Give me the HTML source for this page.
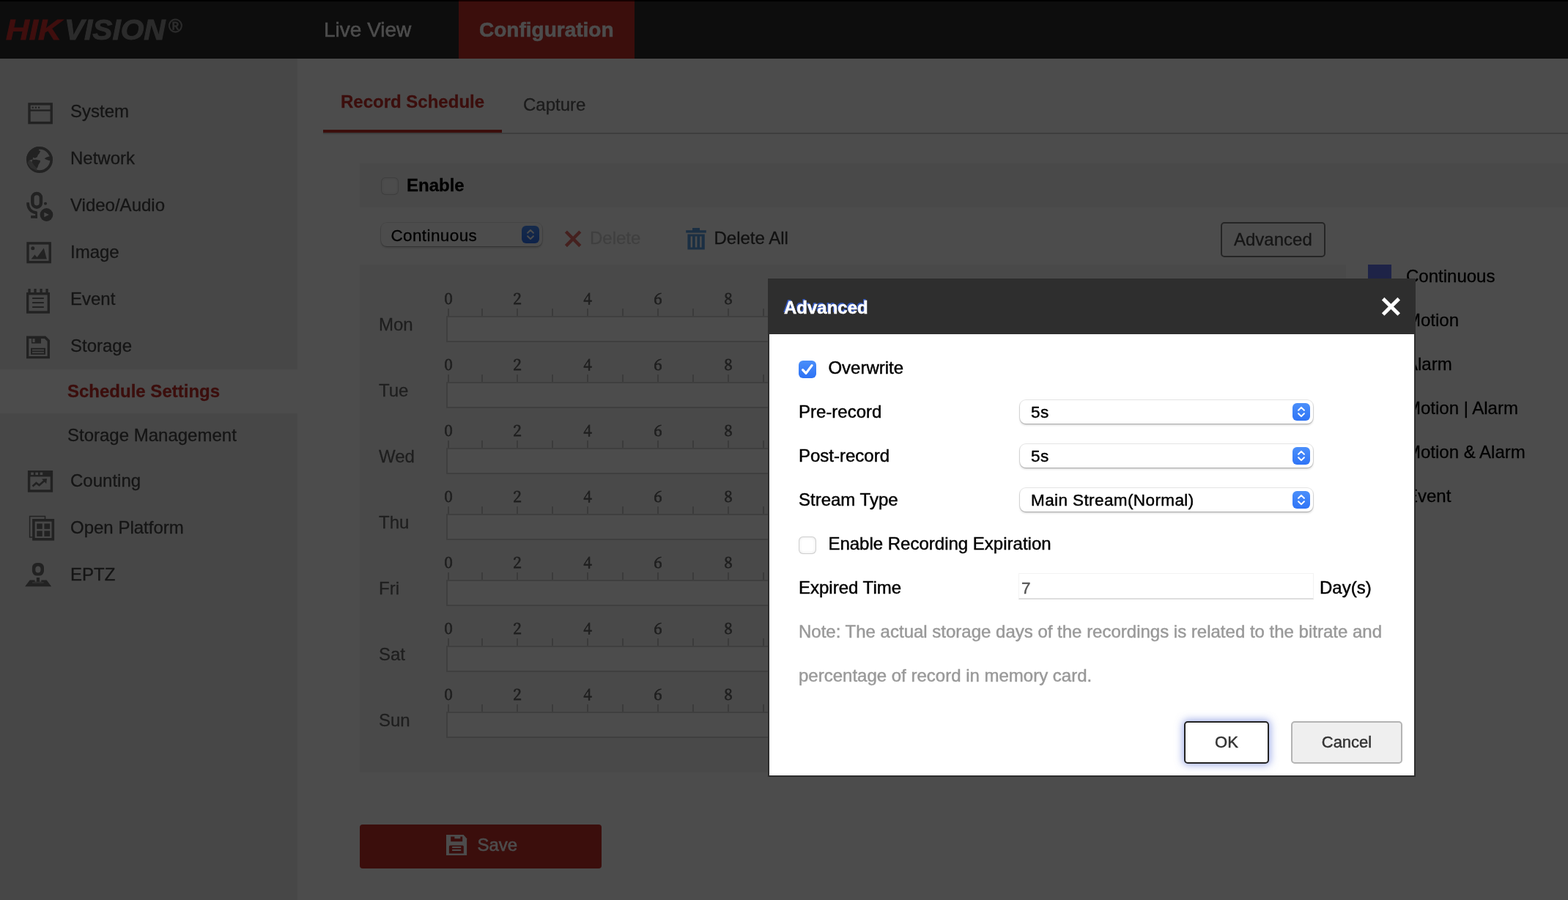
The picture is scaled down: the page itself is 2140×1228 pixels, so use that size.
<!DOCTYPE html>
<html lang="en"><head><meta charset="utf-8"><title>Configuration</title>
<style>
html,body{margin:0;padding:0}
#wrap{position:absolute;left:0;top:0;width:2140px;height:1228px;will-change:transform}
body{width:2140px;height:1228px;overflow:hidden;position:relative;background:#fff;font-family:"Liberation Sans",sans-serif;color:#464646;-webkit-text-stroke:.3px}
div,span{box-sizing:border-box}
.abs{position:absolute}
#header{position:absolute;left:0;top:0;width:2140px;height:80px;background:#2d2d2d}
#side{position:absolute;left:0;top:80px;width:406px;height:1148px;background:#eeeeee}
#mask{position:absolute;left:0;top:0;width:2140px;height:1228px;background:rgba(0,0,0,.7)}
#topline{position:absolute;left:0;top:0;width:626px;height:2px;background:#000}
#topline2{position:absolute;left:866px;top:0;width:1274px;height:2px;background:#000}
.sel{position:absolute;background:#fff;border-radius:8px;box-shadow:0 0 0 1px rgba(0,0,0,.10),0 1px 1px rgba(0,0,0,.12),0 2px 3px rgba(0,0,0,.18)}
.sel .btn{position:absolute;right:4px;top:4px;width:24px;height:24px;border-radius:6px;background:linear-gradient(#4b8ffa,#2f74f6)}
.sel .btn svg{position:absolute;left:0;top:0}
.mactext{font-size:22.5px !important;letter-spacing:.4px;color:#000}
.cb{position:absolute;width:24px;height:24px;border-radius:6px;background:#fff;box-shadow:inset 0 0 0 1px #cfcfcf,inset 0 0 4px 1px rgba(0,0,0,.10)}
.cb.on{background:linear-gradient(#4a8ef9,#2d72f5);box-shadow:none}
svg{display:block}
.num{position:absolute;left:0;top:0;font-family:"Noto Serif CJK SC","Liberation Serif",serif;font-size:21px;line-height:28px;color:#6a6a6a;-webkit-text-stroke:.8px}
</style></head><body><div id="wrap">

<div id="header">
<div class="abs" style="left:626px;top:0;width:240px;height:80px;background:#c62f2b;border-top:2px solid #4a0000"></div>
<div class="abs" style="left:8px;top:18.5px;height:44px;white-space:nowrap;font-weight:bold;font-style:italic;font-size:38px;line-height:44px;-webkit-text-stroke:.9px"><span id="hik" style="display:inline-block;color:#d2302e;transform-origin:0 50%;transform:scaleX(1.16)">HIK</span><span id="vis" style="display:inline-block;color:#929292;margin-left:14.5px;transform-origin:0 50%;transform:scaleX(1.068)">VISION</span></div>
<div class="abs" style="left:230px;top:20px;font-size:25.5px;line-height:30px;color:#929292;-webkit-text-stroke:.8px">&reg;</div>
<div style="position:absolute;left:442px;top:25px;font-size:28px;line-height:31px;white-space:nowrap;color:#fff;-webkit-text-stroke:.5px">Live View</div>
<div style="position:absolute;left:654px;top:25px;font-size:28px;line-height:31px;white-space:nowrap;font-weight:bold;color:#fff;-webkit-text-stroke:.5px">Configuration</div>
</div>
<div id="side">
<div class="abs" style="left:0;top:424px;width:406px;height:60px;background:#fff"></div>
<div style="position:absolute;left:96px;top:58px;font-size:24px;line-height:27px;white-space:nowrap;">System</div>
<div style="position:absolute;left:96px;top:122px;font-size:24px;line-height:27px;white-space:nowrap;">Network</div>
<div style="position:absolute;left:96px;top:186px;font-size:24px;line-height:27px;white-space:nowrap;">Video/Audio</div>
<div style="position:absolute;left:96px;top:250px;font-size:24px;line-height:27px;white-space:nowrap;">Image</div>
<div style="position:absolute;left:96px;top:314px;font-size:24px;line-height:27px;white-space:nowrap;">Event</div>
<div style="position:absolute;left:96px;top:378px;font-size:24px;line-height:27px;white-space:nowrap;">Storage</div>
<div style="position:absolute;left:96px;top:562px;font-size:24px;line-height:27px;white-space:nowrap;">Counting</div>
<div style="position:absolute;left:96px;top:626px;font-size:24px;line-height:27px;white-space:nowrap;">Open Platform</div>
<div style="position:absolute;left:96px;top:690px;font-size:24px;line-height:27px;white-space:nowrap;">EPTZ</div>
<div style="position:absolute;left:92px;top:440px;font-size:24px;line-height:27px;white-space:nowrap;font-weight:bold;color:#c62f2b">Schedule Settings</div>
<div style="position:absolute;left:92px;top:500px;font-size:24px;line-height:27px;white-space:nowrap;">Storage Management</div>
<svg class="abs" style="left:0;top:0" width="406" height="1148" viewBox="0 80 406 1148" fill="none" stroke="#727272">
<rect x="40" y="141.9" width="30.2" height="25.7" stroke-width="3.4"/>
<line x1="40" y1="150.6" x2="70" y2="150.6" stroke-width="2.4"/>
<g fill="#727272" stroke="none"><rect x="43.6" y="145.6" width="2.2" height="2.2"/><rect x="47.8" y="145.6" width="2.2" height="2.2"/><rect x="52" y="145.6" width="2.2" height="2.2"/></g>
<clipPath id="gc"><circle cx="54" cy="218" r="18"/></clipPath>
<circle cx="54" cy="218" r="16.15" stroke-width="3.7"/>
<g clip-path="url(#gc)" stroke="none"><path fill="#9c9c9c" d="M39.8 218.5 L43.9 221.3 L46.4 224.6 L48.8 227.8 L50.4 228.6 L50.4 233 L42.3 229 L37.5 222.5 Z"/><path fill="#727272" d="M53.6 199 L53.6 203 L52.8 205.2 L55.2 206 L53.8 209.3 L51.8 211.6 L50.8 214.2 L47.6 215.8 L45.4 214.8 L44.6 216.2 L46 217.2 L42.6 218 L39.8 219 L35 219 L35 199 Z"/><path fill="#727272" d="M44 218.3 L49 217.7 L55 219 L54.6 221.6 L52.6 224.6 L51 229.2 L48.6 228.2 L46 224.8 L43.5 221.3 Z"/><path fill="#727272" d="M60.6 216.2 L63.6 214.4 L66.7 213.6 L73 213.6 L73 219.2 L66.7 218.9 L63.2 217.8 Z"/></g>
<rect x="44.35" y="263.95" width="11.6" height="18.7" rx="5.8" stroke-width="4.5"/>
<path d="M38 276.2 C38 284.5 42.4 289.4 49.8 290.4" stroke-width="3.7"/>
<rect x="48.2" y="288.6" width="2.7" height="9.2" fill="#727272" stroke="none"/>
<rect x="42.1" y="294.1" width="8.8" height="3.7" fill="#727272" stroke="none"/>
<circle cx="62" cy="277.8" r="2.05" fill="#727272" stroke="none"/>
<circle cx="63.45" cy="293" r="10.2" fill="#eeeeee" stroke="none"/>
<circle cx="63.45" cy="293" r="8.9" fill="#727272" stroke="none"/>
<path d="M60.3 289.7 L66.8 293 L60.3 296.3 Z" fill="#eeeeee" stroke="none"/>
<rect x="38" y="331.9" width="30.2" height="25.7" stroke-width="3.4"/>
<circle cx="44.8" cy="338.8" r="2.5" fill="#727272" stroke="none"/>
<path d="M42.6 353.4 L47.4 347.4 L50.6 351 L59.8 338.4 L63.8 353.4 Z" fill="#727272" stroke="none"/>
<rect x="37.7" y="400.7" width="28.6" height="25.3" stroke-width="3.4"/>
<g fill="#727272" stroke="none"><rect x="38.4" y="394" width="3.3" height="6"/><rect x="46.4" y="394" width="3.3" height="6"/><rect x="54.4" y="394" width="3.3" height="6"/><rect x="62.4" y="394" width="3.3" height="6"/></g>
<g stroke-width="2"><line x1="44.1" y1="407" x2="59.8" y2="407"/><line x1="44.1" y1="413" x2="59.8" y2="413"/><line x1="44.1" y1="419" x2="59.8" y2="419"/></g>
<path d="M37.7 460.2 L61.5 460.2 L66.3 465 L66.3 487.6 L37.7 487.6 Z" stroke-width="3.4"/>
<rect x="43" y="460" width="13" height="8.6" fill="#727272" stroke="none"/>
<rect x="44.4" y="462.2" width="3.2" height="4.8" fill="#eeeeee" stroke="none"/>
<rect x="42" y="474.8" width="20" height="9" fill="#727272" stroke="none"/>
<g stroke="#eeeeee" stroke-width="1.6"><line x1="44" y1="477.6" x2="60" y2="477.6"/><line x1="44" y1="481" x2="60" y2="481"/></g>
<rect x="39.6" y="643.7" width="30.8" height="26.2" stroke-width="3.4"/>
<rect x="39.6" y="643" width="30.8" height="7.4" fill="#727272" stroke="none"/>
<g fill="#eeeeee" stroke="none"><rect x="42.2" y="644.6" width="3.6" height="3.4"/><rect x="48.4" y="644.6" width="3.6" height="3.4"/><rect x="54.6" y="644.6" width="3.6" height="3.4"/></g>
<path d="M44.5 663.5 L49.5 659 L53.5 662 L61 655.5" stroke-width="2.6"/>
<path d="M57 653.6 L64 653 L63.2 660 Z" fill="#727272" stroke="none"/>
<path d="M44 733 L40.6 733 L40.6 704.5 L61.5 704.5 L61.5 708" stroke-width="1.5"/>
<rect x="45.9" y="709.8" width="26.4" height="26" stroke-width="3.6"/>
<g fill="#727272" stroke="none"><rect x="50.2" y="714.4" width="7.6" height="7.4"/><rect x="60.4" y="714.4" width="7.8" height="7.4"/><rect x="50.2" y="724.3" width="7.6" height="7.6"/><rect x="60.4" y="724.3" width="7.8" height="7.6"/></g>
<path fill="#727272" stroke="none" fill-rule="evenodd" d="M50.4 767.9 H53.5 A6.5 6.5 0 0 1 60 774.4 V779.1 A6.5 6.5 0 0 1 53.5 785.6 H50.4 A6.5 6.5 0 0 1 43.9 779.1 V774.4 A6.5 6.5 0 0 1 50.4 767.9 Z M51.9 772.4 A3.65 4.6 0 0 0 51.9 781.6 A3.65 4.6 0 0 0 51.9 772.4 Z"/>
<rect x="49.8" y="788" width="4.3" height="5.8" fill="#727272" stroke="none"/>
<path d="M40.7 791.5 L47.6 791.5 L47.6 793.8 L56.3 793.8 L56.3 791.5 L63.6 791.5 L70.2 800.2 L34.1 800.2 Z" fill="#727272" stroke="none"/>
<rect x="44" y="794" width="15.8" height="2" fill="#9a9a9a" stroke="none"/>
</svg>
</div>
<div id="main" class="abs" style="left:406px;top:80px;width:1734px;height:1148px">
<div class="abs" style="left:35px;top:101px;width:1699px;height:2px;background:#d0d0d0"></div>
<div class="abs" style="left:35px;top:97px;width:244px;height:4px;background:#c62f2b"></div>
<div style="position:absolute;left:59px;top:45px;font-size:24px;line-height:27px;white-space:nowrap;font-weight:bold;color:#c62f2b">Record Schedule</div>
<div style="position:absolute;left:308px;top:49px;font-size:24px;line-height:27px;white-space:nowrap;color:#5a5a5a">Capture</div>
<div class="abs" style="left:85px;top:143px;width:1649px;height:60px;background:#f6f6f6"></div>
<div class="cb" style="left:114px;top:162px"></div>
<div style="position:absolute;left:149px;top:159px;font-size:24px;line-height:27px;white-space:nowrap;font-weight:bold;color:#000">Enable</div>
<div class="sel" style="left:114px;top:224px;width:220px;height:32px"><div class="btn"><svg width="24" height="24" viewBox="0 0 24 24" fill="none" stroke="#fff" stroke-width="2" stroke-linecap="round" stroke-linejoin="round"><path d="M8.1 9.7 L12 5.9 L15.9 9.7 M8.1 14.3 L12 18.1 L15.9 14.3"/></svg></div></div>
<div class="mactext" style="position:absolute;left:127.39999999999998px;top:229px;font-size:22px;line-height:25px;white-space:nowrap;">Continuous</div>
<svg class="abs" style="left:362px;top:232px" width="28" height="28" viewBox="768 312 28 28" fill="none" stroke="#e66e6a" stroke-width="4.4"><path d="M772.4 316 L791.8 335.6 M791.8 316 L772.4 335.6"/></svg>
<div style="position:absolute;left:399px;top:231px;font-size:24px;line-height:27px;white-space:nowrap;color:#d4d4d4">Delete</div>
<svg class="abs" style="left:528px;top:228px" width="34" height="36" viewBox="934 308 34 36" fill="#5c9ee0" stroke="none"><rect x="936.2" y="314.2" width="27.6" height="3.4"/><rect x="945" y="311" width="10" height="4"/><path d="M938.4 319.6 H961.8 V340.6 H938.4 Z M942.6 322.4 V337.6 H945 V322.4 Z M948.8 322.4 V337.6 H951.4 V322.4 Z M955.2 322.4 V337.6 H957.6 V322.4 Z" fill-rule="evenodd"/></svg>
<div style="position:absolute;left:568.5px;top:231px;font-size:24px;line-height:27px;white-space:nowrap;color:#3a3a3a">Delete All</div>
<div class="abs" style="left:1260px;top:223px;width:143px;height:48px;border:2px solid #7c7c7c;border-radius:5px"></div>
<div style="position:absolute;left:1278px;top:233px;font-size:24px;line-height:27px;white-space:nowrap;color:#484848">Advanced</div>
<div class="abs" style="left:85px;top:281px;width:1346px;height:693px;background:#f6f6f6"></div>
<div style="position:absolute;left:111px;top:349px;font-size:24px;line-height:27px;white-space:nowrap;color:#666">Mon</div>
<div class="abs" style="left:203px;top:351px;width:1155px;height:36px;border:2px solid #d4d4d4;background:#fff"></div>
<i style="position:absolute;left:205px;top:341px;width:2px;height:10px;background:#c6c6c6"></i><i style="position:absolute;left:251px;top:341px;width:2px;height:10px;background:#c6c6c6"></i><i style="position:absolute;left:299px;top:341px;width:2px;height:10px;background:#c6c6c6"></i><i style="position:absolute;left:347px;top:341px;width:2px;height:10px;background:#c6c6c6"></i><i style="position:absolute;left:395px;top:341px;width:2px;height:10px;background:#c6c6c6"></i><i style="position:absolute;left:443px;top:341px;width:2px;height:10px;background:#c6c6c6"></i><i style="position:absolute;left:491px;top:341px;width:2px;height:10px;background:#c6c6c6"></i><i style="position:absolute;left:539px;top:341px;width:2px;height:10px;background:#c6c6c6"></i><i style="position:absolute;left:587px;top:341px;width:2px;height:10px;background:#c6c6c6"></i><i style="position:absolute;left:635px;top:341px;width:2px;height:10px;background:#c6c6c6"></i><i style="position:absolute;left:683px;top:341px;width:2px;height:10px;background:#c6c6c6"></i><i style="position:absolute;left:731px;top:341px;width:2px;height:10px;background:#c6c6c6"></i><i style="position:absolute;left:779px;top:341px;width:2px;height:10px;background:#c6c6c6"></i><i style="position:absolute;left:827px;top:341px;width:2px;height:10px;background:#c6c6c6"></i><i style="position:absolute;left:875px;top:341px;width:2px;height:10px;background:#c6c6c6"></i><i style="position:absolute;left:923px;top:341px;width:2px;height:10px;background:#c6c6c6"></i><i style="position:absolute;left:971px;top:341px;width:2px;height:10px;background:#c6c6c6"></i><i style="position:absolute;left:1019px;top:341px;width:2px;height:10px;background:#c6c6c6"></i><i style="position:absolute;left:1067px;top:341px;width:2px;height:10px;background:#c6c6c6"></i><i style="position:absolute;left:1115px;top:341px;width:2px;height:10px;background:#c6c6c6"></i><i style="position:absolute;left:1163px;top:341px;width:2px;height:10px;background:#c6c6c6"></i><i style="position:absolute;left:1211px;top:341px;width:2px;height:10px;background:#c6c6c6"></i><i style="position:absolute;left:1259px;top:341px;width:2px;height:10px;background:#c6c6c6"></i><i style="position:absolute;left:1307px;top:341px;width:2px;height:10px;background:#c6c6c6"></i><i style="position:absolute;left:1355px;top:341px;width:2px;height:10px;background:#c6c6c6"></i>
<div class="num"><span style="position:absolute;left:186px;top:312px;width:40px;text-align:center">0</span><span style="position:absolute;left:280px;top:312px;width:40px;text-align:center">2</span><span style="position:absolute;left:376px;top:312px;width:40px;text-align:center">4</span><span style="position:absolute;left:472px;top:312px;width:40px;text-align:center">6</span><span style="position:absolute;left:568px;top:312px;width:40px;text-align:center">8</span><span style="position:absolute;left:664px;top:312px;width:40px;text-align:center">10</span><span style="position:absolute;left:760px;top:312px;width:40px;text-align:center">12</span><span style="position:absolute;left:856px;top:312px;width:40px;text-align:center">14</span><span style="position:absolute;left:952px;top:312px;width:40px;text-align:center">16</span><span style="position:absolute;left:1048px;top:312px;width:40px;text-align:center">18</span><span style="position:absolute;left:1144px;top:312px;width:40px;text-align:center">20</span><span style="position:absolute;left:1240px;top:312px;width:40px;text-align:center">22</span><span style="position:absolute;left:1336px;top:312px;width:40px;text-align:center">24</span></div>
<div style="position:absolute;left:111px;top:439px;font-size:24px;line-height:27px;white-space:nowrap;color:#666">Tue</div>
<div class="abs" style="left:203px;top:441px;width:1155px;height:36px;border:2px solid #d4d4d4;background:#fff"></div>
<i style="position:absolute;left:205px;top:431px;width:2px;height:10px;background:#c6c6c6"></i><i style="position:absolute;left:251px;top:431px;width:2px;height:10px;background:#c6c6c6"></i><i style="position:absolute;left:299px;top:431px;width:2px;height:10px;background:#c6c6c6"></i><i style="position:absolute;left:347px;top:431px;width:2px;height:10px;background:#c6c6c6"></i><i style="position:absolute;left:395px;top:431px;width:2px;height:10px;background:#c6c6c6"></i><i style="position:absolute;left:443px;top:431px;width:2px;height:10px;background:#c6c6c6"></i><i style="position:absolute;left:491px;top:431px;width:2px;height:10px;background:#c6c6c6"></i><i style="position:absolute;left:539px;top:431px;width:2px;height:10px;background:#c6c6c6"></i><i style="position:absolute;left:587px;top:431px;width:2px;height:10px;background:#c6c6c6"></i><i style="position:absolute;left:635px;top:431px;width:2px;height:10px;background:#c6c6c6"></i><i style="position:absolute;left:683px;top:431px;width:2px;height:10px;background:#c6c6c6"></i><i style="position:absolute;left:731px;top:431px;width:2px;height:10px;background:#c6c6c6"></i><i style="position:absolute;left:779px;top:431px;width:2px;height:10px;background:#c6c6c6"></i><i style="position:absolute;left:827px;top:431px;width:2px;height:10px;background:#c6c6c6"></i><i style="position:absolute;left:875px;top:431px;width:2px;height:10px;background:#c6c6c6"></i><i style="position:absolute;left:923px;top:431px;width:2px;height:10px;background:#c6c6c6"></i><i style="position:absolute;left:971px;top:431px;width:2px;height:10px;background:#c6c6c6"></i><i style="position:absolute;left:1019px;top:431px;width:2px;height:10px;background:#c6c6c6"></i><i style="position:absolute;left:1067px;top:431px;width:2px;height:10px;background:#c6c6c6"></i><i style="position:absolute;left:1115px;top:431px;width:2px;height:10px;background:#c6c6c6"></i><i style="position:absolute;left:1163px;top:431px;width:2px;height:10px;background:#c6c6c6"></i><i style="position:absolute;left:1211px;top:431px;width:2px;height:10px;background:#c6c6c6"></i><i style="position:absolute;left:1259px;top:431px;width:2px;height:10px;background:#c6c6c6"></i><i style="position:absolute;left:1307px;top:431px;width:2px;height:10px;background:#c6c6c6"></i><i style="position:absolute;left:1355px;top:431px;width:2px;height:10px;background:#c6c6c6"></i>
<div class="num"><span style="position:absolute;left:186px;top:402px;width:40px;text-align:center">0</span><span style="position:absolute;left:280px;top:402px;width:40px;text-align:center">2</span><span style="position:absolute;left:376px;top:402px;width:40px;text-align:center">4</span><span style="position:absolute;left:472px;top:402px;width:40px;text-align:center">6</span><span style="position:absolute;left:568px;top:402px;width:40px;text-align:center">8</span><span style="position:absolute;left:664px;top:402px;width:40px;text-align:center">10</span><span style="position:absolute;left:760px;top:402px;width:40px;text-align:center">12</span><span style="position:absolute;left:856px;top:402px;width:40px;text-align:center">14</span><span style="position:absolute;left:952px;top:402px;width:40px;text-align:center">16</span><span style="position:absolute;left:1048px;top:402px;width:40px;text-align:center">18</span><span style="position:absolute;left:1144px;top:402px;width:40px;text-align:center">20</span><span style="position:absolute;left:1240px;top:402px;width:40px;text-align:center">22</span><span style="position:absolute;left:1336px;top:402px;width:40px;text-align:center">24</span></div>
<div style="position:absolute;left:111px;top:529px;font-size:24px;line-height:27px;white-space:nowrap;color:#666">Wed</div>
<div class="abs" style="left:203px;top:531px;width:1155px;height:36px;border:2px solid #d4d4d4;background:#fff"></div>
<i style="position:absolute;left:205px;top:521px;width:2px;height:10px;background:#c6c6c6"></i><i style="position:absolute;left:251px;top:521px;width:2px;height:10px;background:#c6c6c6"></i><i style="position:absolute;left:299px;top:521px;width:2px;height:10px;background:#c6c6c6"></i><i style="position:absolute;left:347px;top:521px;width:2px;height:10px;background:#c6c6c6"></i><i style="position:absolute;left:395px;top:521px;width:2px;height:10px;background:#c6c6c6"></i><i style="position:absolute;left:443px;top:521px;width:2px;height:10px;background:#c6c6c6"></i><i style="position:absolute;left:491px;top:521px;width:2px;height:10px;background:#c6c6c6"></i><i style="position:absolute;left:539px;top:521px;width:2px;height:10px;background:#c6c6c6"></i><i style="position:absolute;left:587px;top:521px;width:2px;height:10px;background:#c6c6c6"></i><i style="position:absolute;left:635px;top:521px;width:2px;height:10px;background:#c6c6c6"></i><i style="position:absolute;left:683px;top:521px;width:2px;height:10px;background:#c6c6c6"></i><i style="position:absolute;left:731px;top:521px;width:2px;height:10px;background:#c6c6c6"></i><i style="position:absolute;left:779px;top:521px;width:2px;height:10px;background:#c6c6c6"></i><i style="position:absolute;left:827px;top:521px;width:2px;height:10px;background:#c6c6c6"></i><i style="position:absolute;left:875px;top:521px;width:2px;height:10px;background:#c6c6c6"></i><i style="position:absolute;left:923px;top:521px;width:2px;height:10px;background:#c6c6c6"></i><i style="position:absolute;left:971px;top:521px;width:2px;height:10px;background:#c6c6c6"></i><i style="position:absolute;left:1019px;top:521px;width:2px;height:10px;background:#c6c6c6"></i><i style="position:absolute;left:1067px;top:521px;width:2px;height:10px;background:#c6c6c6"></i><i style="position:absolute;left:1115px;top:521px;width:2px;height:10px;background:#c6c6c6"></i><i style="position:absolute;left:1163px;top:521px;width:2px;height:10px;background:#c6c6c6"></i><i style="position:absolute;left:1211px;top:521px;width:2px;height:10px;background:#c6c6c6"></i><i style="position:absolute;left:1259px;top:521px;width:2px;height:10px;background:#c6c6c6"></i><i style="position:absolute;left:1307px;top:521px;width:2px;height:10px;background:#c6c6c6"></i><i style="position:absolute;left:1355px;top:521px;width:2px;height:10px;background:#c6c6c6"></i>
<div class="num"><span style="position:absolute;left:186px;top:492px;width:40px;text-align:center">0</span><span style="position:absolute;left:280px;top:492px;width:40px;text-align:center">2</span><span style="position:absolute;left:376px;top:492px;width:40px;text-align:center">4</span><span style="position:absolute;left:472px;top:492px;width:40px;text-align:center">6</span><span style="position:absolute;left:568px;top:492px;width:40px;text-align:center">8</span><span style="position:absolute;left:664px;top:492px;width:40px;text-align:center">10</span><span style="position:absolute;left:760px;top:492px;width:40px;text-align:center">12</span><span style="position:absolute;left:856px;top:492px;width:40px;text-align:center">14</span><span style="position:absolute;left:952px;top:492px;width:40px;text-align:center">16</span><span style="position:absolute;left:1048px;top:492px;width:40px;text-align:center">18</span><span style="position:absolute;left:1144px;top:492px;width:40px;text-align:center">20</span><span style="position:absolute;left:1240px;top:492px;width:40px;text-align:center">22</span><span style="position:absolute;left:1336px;top:492px;width:40px;text-align:center">24</span></div>
<div style="position:absolute;left:111px;top:619px;font-size:24px;line-height:27px;white-space:nowrap;color:#666">Thu</div>
<div class="abs" style="left:203px;top:621px;width:1155px;height:36px;border:2px solid #d4d4d4;background:#fff"></div>
<i style="position:absolute;left:205px;top:611px;width:2px;height:10px;background:#c6c6c6"></i><i style="position:absolute;left:251px;top:611px;width:2px;height:10px;background:#c6c6c6"></i><i style="position:absolute;left:299px;top:611px;width:2px;height:10px;background:#c6c6c6"></i><i style="position:absolute;left:347px;top:611px;width:2px;height:10px;background:#c6c6c6"></i><i style="position:absolute;left:395px;top:611px;width:2px;height:10px;background:#c6c6c6"></i><i style="position:absolute;left:443px;top:611px;width:2px;height:10px;background:#c6c6c6"></i><i style="position:absolute;left:491px;top:611px;width:2px;height:10px;background:#c6c6c6"></i><i style="position:absolute;left:539px;top:611px;width:2px;height:10px;background:#c6c6c6"></i><i style="position:absolute;left:587px;top:611px;width:2px;height:10px;background:#c6c6c6"></i><i style="position:absolute;left:635px;top:611px;width:2px;height:10px;background:#c6c6c6"></i><i style="position:absolute;left:683px;top:611px;width:2px;height:10px;background:#c6c6c6"></i><i style="position:absolute;left:731px;top:611px;width:2px;height:10px;background:#c6c6c6"></i><i style="position:absolute;left:779px;top:611px;width:2px;height:10px;background:#c6c6c6"></i><i style="position:absolute;left:827px;top:611px;width:2px;height:10px;background:#c6c6c6"></i><i style="position:absolute;left:875px;top:611px;width:2px;height:10px;background:#c6c6c6"></i><i style="position:absolute;left:923px;top:611px;width:2px;height:10px;background:#c6c6c6"></i><i style="position:absolute;left:971px;top:611px;width:2px;height:10px;background:#c6c6c6"></i><i style="position:absolute;left:1019px;top:611px;width:2px;height:10px;background:#c6c6c6"></i><i style="position:absolute;left:1067px;top:611px;width:2px;height:10px;background:#c6c6c6"></i><i style="position:absolute;left:1115px;top:611px;width:2px;height:10px;background:#c6c6c6"></i><i style="position:absolute;left:1163px;top:611px;width:2px;height:10px;background:#c6c6c6"></i><i style="position:absolute;left:1211px;top:611px;width:2px;height:10px;background:#c6c6c6"></i><i style="position:absolute;left:1259px;top:611px;width:2px;height:10px;background:#c6c6c6"></i><i style="position:absolute;left:1307px;top:611px;width:2px;height:10px;background:#c6c6c6"></i><i style="position:absolute;left:1355px;top:611px;width:2px;height:10px;background:#c6c6c6"></i>
<div class="num"><span style="position:absolute;left:186px;top:582px;width:40px;text-align:center">0</span><span style="position:absolute;left:280px;top:582px;width:40px;text-align:center">2</span><span style="position:absolute;left:376px;top:582px;width:40px;text-align:center">4</span><span style="position:absolute;left:472px;top:582px;width:40px;text-align:center">6</span><span style="position:absolute;left:568px;top:582px;width:40px;text-align:center">8</span><span style="position:absolute;left:664px;top:582px;width:40px;text-align:center">10</span><span style="position:absolute;left:760px;top:582px;width:40px;text-align:center">12</span><span style="position:absolute;left:856px;top:582px;width:40px;text-align:center">14</span><span style="position:absolute;left:952px;top:582px;width:40px;text-align:center">16</span><span style="position:absolute;left:1048px;top:582px;width:40px;text-align:center">18</span><span style="position:absolute;left:1144px;top:582px;width:40px;text-align:center">20</span><span style="position:absolute;left:1240px;top:582px;width:40px;text-align:center">22</span><span style="position:absolute;left:1336px;top:582px;width:40px;text-align:center">24</span></div>
<div style="position:absolute;left:111px;top:709px;font-size:24px;line-height:27px;white-space:nowrap;color:#666">Fri</div>
<div class="abs" style="left:203px;top:711px;width:1155px;height:36px;border:2px solid #d4d4d4;background:#fff"></div>
<i style="position:absolute;left:205px;top:701px;width:2px;height:10px;background:#c6c6c6"></i><i style="position:absolute;left:251px;top:701px;width:2px;height:10px;background:#c6c6c6"></i><i style="position:absolute;left:299px;top:701px;width:2px;height:10px;background:#c6c6c6"></i><i style="position:absolute;left:347px;top:701px;width:2px;height:10px;background:#c6c6c6"></i><i style="position:absolute;left:395px;top:701px;width:2px;height:10px;background:#c6c6c6"></i><i style="position:absolute;left:443px;top:701px;width:2px;height:10px;background:#c6c6c6"></i><i style="position:absolute;left:491px;top:701px;width:2px;height:10px;background:#c6c6c6"></i><i style="position:absolute;left:539px;top:701px;width:2px;height:10px;background:#c6c6c6"></i><i style="position:absolute;left:587px;top:701px;width:2px;height:10px;background:#c6c6c6"></i><i style="position:absolute;left:635px;top:701px;width:2px;height:10px;background:#c6c6c6"></i><i style="position:absolute;left:683px;top:701px;width:2px;height:10px;background:#c6c6c6"></i><i style="position:absolute;left:731px;top:701px;width:2px;height:10px;background:#c6c6c6"></i><i style="position:absolute;left:779px;top:701px;width:2px;height:10px;background:#c6c6c6"></i><i style="position:absolute;left:827px;top:701px;width:2px;height:10px;background:#c6c6c6"></i><i style="position:absolute;left:875px;top:701px;width:2px;height:10px;background:#c6c6c6"></i><i style="position:absolute;left:923px;top:701px;width:2px;height:10px;background:#c6c6c6"></i><i style="position:absolute;left:971px;top:701px;width:2px;height:10px;background:#c6c6c6"></i><i style="position:absolute;left:1019px;top:701px;width:2px;height:10px;background:#c6c6c6"></i><i style="position:absolute;left:1067px;top:701px;width:2px;height:10px;background:#c6c6c6"></i><i style="position:absolute;left:1115px;top:701px;width:2px;height:10px;background:#c6c6c6"></i><i style="position:absolute;left:1163px;top:701px;width:2px;height:10px;background:#c6c6c6"></i><i style="position:absolute;left:1211px;top:701px;width:2px;height:10px;background:#c6c6c6"></i><i style="position:absolute;left:1259px;top:701px;width:2px;height:10px;background:#c6c6c6"></i><i style="position:absolute;left:1307px;top:701px;width:2px;height:10px;background:#c6c6c6"></i><i style="position:absolute;left:1355px;top:701px;width:2px;height:10px;background:#c6c6c6"></i>
<div class="num"><span style="position:absolute;left:186px;top:672px;width:40px;text-align:center">0</span><span style="position:absolute;left:280px;top:672px;width:40px;text-align:center">2</span><span style="position:absolute;left:376px;top:672px;width:40px;text-align:center">4</span><span style="position:absolute;left:472px;top:672px;width:40px;text-align:center">6</span><span style="position:absolute;left:568px;top:672px;width:40px;text-align:center">8</span><span style="position:absolute;left:664px;top:672px;width:40px;text-align:center">10</span><span style="position:absolute;left:760px;top:672px;width:40px;text-align:center">12</span><span style="position:absolute;left:856px;top:672px;width:40px;text-align:center">14</span><span style="position:absolute;left:952px;top:672px;width:40px;text-align:center">16</span><span style="position:absolute;left:1048px;top:672px;width:40px;text-align:center">18</span><span style="position:absolute;left:1144px;top:672px;width:40px;text-align:center">20</span><span style="position:absolute;left:1240px;top:672px;width:40px;text-align:center">22</span><span style="position:absolute;left:1336px;top:672px;width:40px;text-align:center">24</span></div>
<div style="position:absolute;left:111px;top:799px;font-size:24px;line-height:27px;white-space:nowrap;color:#666">Sat</div>
<div class="abs" style="left:203px;top:801px;width:1155px;height:36px;border:2px solid #d4d4d4;background:#fff"></div>
<i style="position:absolute;left:205px;top:791px;width:2px;height:10px;background:#c6c6c6"></i><i style="position:absolute;left:251px;top:791px;width:2px;height:10px;background:#c6c6c6"></i><i style="position:absolute;left:299px;top:791px;width:2px;height:10px;background:#c6c6c6"></i><i style="position:absolute;left:347px;top:791px;width:2px;height:10px;background:#c6c6c6"></i><i style="position:absolute;left:395px;top:791px;width:2px;height:10px;background:#c6c6c6"></i><i style="position:absolute;left:443px;top:791px;width:2px;height:10px;background:#c6c6c6"></i><i style="position:absolute;left:491px;top:791px;width:2px;height:10px;background:#c6c6c6"></i><i style="position:absolute;left:539px;top:791px;width:2px;height:10px;background:#c6c6c6"></i><i style="position:absolute;left:587px;top:791px;width:2px;height:10px;background:#c6c6c6"></i><i style="position:absolute;left:635px;top:791px;width:2px;height:10px;background:#c6c6c6"></i><i style="position:absolute;left:683px;top:791px;width:2px;height:10px;background:#c6c6c6"></i><i style="position:absolute;left:731px;top:791px;width:2px;height:10px;background:#c6c6c6"></i><i style="position:absolute;left:779px;top:791px;width:2px;height:10px;background:#c6c6c6"></i><i style="position:absolute;left:827px;top:791px;width:2px;height:10px;background:#c6c6c6"></i><i style="position:absolute;left:875px;top:791px;width:2px;height:10px;background:#c6c6c6"></i><i style="position:absolute;left:923px;top:791px;width:2px;height:10px;background:#c6c6c6"></i><i style="position:absolute;left:971px;top:791px;width:2px;height:10px;background:#c6c6c6"></i><i style="position:absolute;left:1019px;top:791px;width:2px;height:10px;background:#c6c6c6"></i><i style="position:absolute;left:1067px;top:791px;width:2px;height:10px;background:#c6c6c6"></i><i style="position:absolute;left:1115px;top:791px;width:2px;height:10px;background:#c6c6c6"></i><i style="position:absolute;left:1163px;top:791px;width:2px;height:10px;background:#c6c6c6"></i><i style="position:absolute;left:1211px;top:791px;width:2px;height:10px;background:#c6c6c6"></i><i style="position:absolute;left:1259px;top:791px;width:2px;height:10px;background:#c6c6c6"></i><i style="position:absolute;left:1307px;top:791px;width:2px;height:10px;background:#c6c6c6"></i><i style="position:absolute;left:1355px;top:791px;width:2px;height:10px;background:#c6c6c6"></i>
<div class="num"><span style="position:absolute;left:186px;top:762px;width:40px;text-align:center">0</span><span style="position:absolute;left:280px;top:762px;width:40px;text-align:center">2</span><span style="position:absolute;left:376px;top:762px;width:40px;text-align:center">4</span><span style="position:absolute;left:472px;top:762px;width:40px;text-align:center">6</span><span style="position:absolute;left:568px;top:762px;width:40px;text-align:center">8</span><span style="position:absolute;left:664px;top:762px;width:40px;text-align:center">10</span><span style="position:absolute;left:760px;top:762px;width:40px;text-align:center">12</span><span style="position:absolute;left:856px;top:762px;width:40px;text-align:center">14</span><span style="position:absolute;left:952px;top:762px;width:40px;text-align:center">16</span><span style="position:absolute;left:1048px;top:762px;width:40px;text-align:center">18</span><span style="position:absolute;left:1144px;top:762px;width:40px;text-align:center">20</span><span style="position:absolute;left:1240px;top:762px;width:40px;text-align:center">22</span><span style="position:absolute;left:1336px;top:762px;width:40px;text-align:center">24</span></div>
<div style="position:absolute;left:111px;top:889px;font-size:24px;line-height:27px;white-space:nowrap;color:#666">Sun</div>
<div class="abs" style="left:203px;top:891px;width:1155px;height:36px;border:2px solid #d4d4d4;background:#fff"></div>
<i style="position:absolute;left:205px;top:881px;width:2px;height:10px;background:#c6c6c6"></i><i style="position:absolute;left:251px;top:881px;width:2px;height:10px;background:#c6c6c6"></i><i style="position:absolute;left:299px;top:881px;width:2px;height:10px;background:#c6c6c6"></i><i style="position:absolute;left:347px;top:881px;width:2px;height:10px;background:#c6c6c6"></i><i style="position:absolute;left:395px;top:881px;width:2px;height:10px;background:#c6c6c6"></i><i style="position:absolute;left:443px;top:881px;width:2px;height:10px;background:#c6c6c6"></i><i style="position:absolute;left:491px;top:881px;width:2px;height:10px;background:#c6c6c6"></i><i style="position:absolute;left:539px;top:881px;width:2px;height:10px;background:#c6c6c6"></i><i style="position:absolute;left:587px;top:881px;width:2px;height:10px;background:#c6c6c6"></i><i style="position:absolute;left:635px;top:881px;width:2px;height:10px;background:#c6c6c6"></i><i style="position:absolute;left:683px;top:881px;width:2px;height:10px;background:#c6c6c6"></i><i style="position:absolute;left:731px;top:881px;width:2px;height:10px;background:#c6c6c6"></i><i style="position:absolute;left:779px;top:881px;width:2px;height:10px;background:#c6c6c6"></i><i style="position:absolute;left:827px;top:881px;width:2px;height:10px;background:#c6c6c6"></i><i style="position:absolute;left:875px;top:881px;width:2px;height:10px;background:#c6c6c6"></i><i style="position:absolute;left:923px;top:881px;width:2px;height:10px;background:#c6c6c6"></i><i style="position:absolute;left:971px;top:881px;width:2px;height:10px;background:#c6c6c6"></i><i style="position:absolute;left:1019px;top:881px;width:2px;height:10px;background:#c6c6c6"></i><i style="position:absolute;left:1067px;top:881px;width:2px;height:10px;background:#c6c6c6"></i><i style="position:absolute;left:1115px;top:881px;width:2px;height:10px;background:#c6c6c6"></i><i style="position:absolute;left:1163px;top:881px;width:2px;height:10px;background:#c6c6c6"></i><i style="position:absolute;left:1211px;top:881px;width:2px;height:10px;background:#c6c6c6"></i><i style="position:absolute;left:1259px;top:881px;width:2px;height:10px;background:#c6c6c6"></i><i style="position:absolute;left:1307px;top:881px;width:2px;height:10px;background:#c6c6c6"></i><i style="position:absolute;left:1355px;top:881px;width:2px;height:10px;background:#c6c6c6"></i>
<div class="num"><span style="position:absolute;left:186px;top:852px;width:40px;text-align:center">0</span><span style="position:absolute;left:280px;top:852px;width:40px;text-align:center">2</span><span style="position:absolute;left:376px;top:852px;width:40px;text-align:center">4</span><span style="position:absolute;left:472px;top:852px;width:40px;text-align:center">6</span><span style="position:absolute;left:568px;top:852px;width:40px;text-align:center">8</span><span style="position:absolute;left:664px;top:852px;width:40px;text-align:center">10</span><span style="position:absolute;left:760px;top:852px;width:40px;text-align:center">12</span><span style="position:absolute;left:856px;top:852px;width:40px;text-align:center">14</span><span style="position:absolute;left:952px;top:852px;width:40px;text-align:center">16</span><span style="position:absolute;left:1048px;top:852px;width:40px;text-align:center">18</span><span style="position:absolute;left:1144px;top:852px;width:40px;text-align:center">20</span><span style="position:absolute;left:1240px;top:852px;width:40px;text-align:center">22</span><span style="position:absolute;left:1336px;top:852px;width:40px;text-align:center">24</span></div>
<div class="abs" style="left:1461px;top:281px;width:32px;height:32px;background:#6775ed"></div>
<div style="position:absolute;left:1513px;top:283px;font-size:24px;line-height:27px;white-space:nowrap;color:#000">Continuous</div>
<div class="abs" style="left:1461px;top:341px;width:32px;height:32px;background:#74b557"></div>
<div style="position:absolute;left:1513px;top:343px;font-size:24px;line-height:27px;white-space:nowrap;color:#000">Motion</div>
<div class="abs" style="left:1461px;top:401px;width:32px;height:32px;background:#b83f42"></div>
<div style="position:absolute;left:1513px;top:403px;font-size:24px;line-height:27px;white-space:nowrap;color:#000">Alarm</div>
<div class="abs" style="left:1461px;top:461px;width:32px;height:32px;background:#e58705"></div>
<div style="position:absolute;left:1513px;top:463px;font-size:24px;line-height:27px;white-space:nowrap;color:#000">Motion | Alarm</div>
<div class="abs" style="left:1461px;top:521px;width:32px;height:32px;background:#41bfbf"></div>
<div style="position:absolute;left:1513px;top:523px;font-size:24px;line-height:27px;white-space:nowrap;color:#000">Motion &amp; Alarm</div>
<div class="abs" style="left:1461px;top:581px;width:32px;height:32px;background:#aa6ffe"></div>
<div style="position:absolute;left:1513px;top:583px;font-size:24px;line-height:27px;white-space:nowrap;color:#000">Event</div>
<div class="abs" style="left:85px;top:1045px;width:330px;height:60px;background:#c62f2b;border-radius:4px"></div>
<svg class="abs" style="left:202px;top:1057px" width="30" height="32" viewBox="608 1137 30 32"><path fill="#fff" d="M609 1139.1 H632.6 L637.1 1144.2 V1166.9 H609 Z"/><path fill="#c62f2b" d="M615.2 1141.4 H620.4 V1144.3 H628.3 V1141.4 H631.2 V1148.2 H615.2 Z"/><path fill="#c62f2b" d="M612.9 1164.6 V1155 Q612.9 1153.4 614.5 1153.4 H631.2 Q632.8 1153.4 632.8 1155 V1164.6 Z"/><rect fill="#fff" x="617.1" y="1155.1" width="12.1" height="2"/><rect fill="#fff" x="617.1" y="1159" width="12.1" height="2"/></svg>
<div style="position:absolute;left:245.5px;top:1058.5px;font-size:24px;line-height:27px;white-space:nowrap;color:#fff;-webkit-text-stroke:.55px">Save</div>
</div>
<div id="mask"></div><div id="topline"></div><div id="topline2"></div>
<div id="dlg" class="abs" style="left:1048px;top:380px;width:884px;height:680px;background:#2e2e2e;color:#000;-webkit-text-stroke:.45px">
<div class="abs" style="left:2px;top:76px;width:880px;height:602px;background:#fff"></div>
<div style="position:absolute;left:22px;top:26px;font-size:24px;line-height:27px;white-space:nowrap;font-weight:bold;color:#fff;text-shadow:-1.6px -1.6px 0 #3457bd">Advanced</div>
<svg class="abs" style="left:834px;top:22px" width="32" height="32" viewBox="1882 402 32 32" stroke="#fff" stroke-width="5" fill="none"><path d="M1887.6 407.6 L1909.2 429 M1909.2 407.6 L1887.6 429"/></svg>
<div class="cb on" style="left:42px;top:112px"><svg width="24" height="24" viewBox="0 0 24 24" fill="none" stroke="#fff" stroke-width="3.2" stroke-linecap="round" stroke-linejoin="round"><path d="M5.6 12.6 L10 17.4 L18 6.6"/></svg></div>
<div style="position:absolute;left:82.40000000000009px;top:108px;font-size:24px;line-height:27px;white-space:nowrap;">Overwrite</div>
<div style="position:absolute;left:42px;top:168px;font-size:24px;line-height:27px;white-space:nowrap;">Pre-record</div>
<div style="position:absolute;left:42px;top:228px;font-size:24px;line-height:27px;white-space:nowrap;">Post-record</div>
<div style="position:absolute;left:42px;top:288px;font-size:24px;line-height:27px;white-space:nowrap;">Stream Type</div>
<div class="sel" style="left:344px;top:166px;width:400px;height:32px"><div class="btn"><svg width="24" height="24" viewBox="0 0 24 24" fill="none" stroke="#fff" stroke-width="2" stroke-linecap="round" stroke-linejoin="round"><path d="M8.1 9.7 L12 5.9 L15.9 9.7 M8.1 14.3 L12 18.1 L15.9 14.3"/></svg></div></div>
<div class="mactext" style="position:absolute;left:359px;top:170px;font-size:22px;line-height:25px;white-space:nowrap;">5s</div>
<div class="sel" style="left:344px;top:226px;width:400px;height:32px"><div class="btn"><svg width="24" height="24" viewBox="0 0 24 24" fill="none" stroke="#fff" stroke-width="2" stroke-linecap="round" stroke-linejoin="round"><path d="M8.1 9.7 L12 5.9 L15.9 9.7 M8.1 14.3 L12 18.1 L15.9 14.3"/></svg></div></div>
<div class="mactext" style="position:absolute;left:359px;top:230px;font-size:22px;line-height:25px;white-space:nowrap;">5s</div>
<div class="sel" style="left:344px;top:286px;width:400px;height:32px"><div class="btn"><svg width="24" height="24" viewBox="0 0 24 24" fill="none" stroke="#fff" stroke-width="2" stroke-linecap="round" stroke-linejoin="round"><path d="M8.1 9.7 L12 5.9 L15.9 9.7 M8.1 14.3 L12 18.1 L15.9 14.3"/></svg></div></div>
<div class="mactext" style="position:absolute;left:359px;top:290px;font-size:22px;line-height:25px;white-space:nowrap;">Main Stream(Normal)</div>
<div class="cb" style="left:42px;top:352px"></div>
<div style="position:absolute;left:82.40000000000009px;top:348px;font-size:24px;line-height:27px;white-space:nowrap;">Enable Recording Expiration</div>
<div style="position:absolute;left:42px;top:408px;font-size:24px;line-height:27px;white-space:nowrap;">Expired Time</div>
<div class="abs" style="left:342px;top:402px;width:403px;height:36px;border:1px solid #f3f3f3;border-bottom:2px solid #dedede;background:#fff"></div>
<div class="mactext" style="position:absolute;left:346px;top:410px;font-size:22px;line-height:25px;white-space:nowrap;color:#555">7</div>
<div style="position:absolute;left:753px;top:408px;font-size:24px;line-height:27px;white-space:nowrap;">Day(s)</div>
<div style="position:absolute;left:42px;top:468px;font-size:24px;line-height:27px;white-space:nowrap;color:#999">Note: The actual storage days of the recordings is related to the bitrate and</div>
<div style="position:absolute;left:42px;top:528px;font-size:24px;line-height:27px;white-space:nowrap;color:#999">percentage of record in memory card.</div>
<div class="abs" style="left:568px;top:604px;width:116px;height:58px;border:2px solid #222;border-radius:5px;background:#fff;box-shadow:0 0 11px 2px rgba(85,110,215,.55)"></div>
<div style="position:absolute;left:568px;top:620px;font-size:22px;line-height:25px;white-space:nowrap;color:#333;width:116px;text-align:center">OK</div>
<div class="abs" style="left:714px;top:604px;width:152px;height:58px;border:2px solid #b4b4b4;border-radius:5px;background:#efefef"></div>
<div style="position:absolute;left:714px;top:620px;font-size:22px;line-height:25px;white-space:nowrap;color:#333;width:152px;text-align:center">Cancel</div>
</div>
</div></body></html>
